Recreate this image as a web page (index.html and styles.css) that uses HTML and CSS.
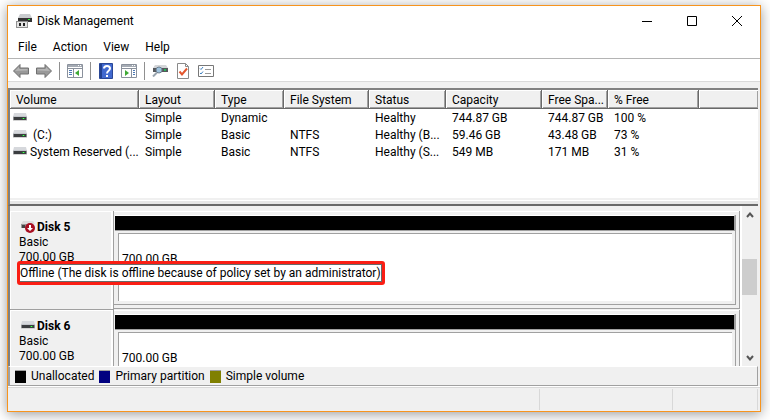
FILE: index.html
```html
<!DOCTYPE html>
<html lang="en">
<head>
    <meta charset="UTF-8">
    <meta name="viewport" content="width=device-width, initial-scale=1.0">
    <title>Disk Management</title>
    <link rel="stylesheet" href="styles.css">
</head>
<body>
<!-- shared drive icon -->
<svg class="defs" aria-hidden="true">
    <symbol id="drive" viewBox="0 0 14 8">
        <path d="M1 0h12l1 4H0z" fill="#d6d8dc"/>
        <path d="M0 3h14v1H0z" fill="#c3c6cb"/>
        <path d="M0 4h14v3H0z" fill="#3b3d40"/>
        <path d="M0 7h14v1H0z" fill="#d4d4d4"/>
        <path d="M0 4h1v3H0zM13 4h1v3h-1z" fill="#8b8d90"/>
        <path d="M9 5h3v1H9z" fill="#1c9a2a"/>
        <path d="M10 5h1v1h-1z" fill="#4dff5c"/>
    </symbol>
</svg>

<div class="window">
    <header class="titlebar">
        <svg class="app-icon" viewBox="0 0 16 15" width="16" height="15">
            <path d="M4 0h10l2 4H2z" fill="#c9cbce"/>
            <path d="M2 4h14v4H2z" fill="#333"/>
            <path d="M12 5h2v1h-2z" fill="#2df03c"/>
            <path d="M0 7h12v7H0z" fill="#909090"/>
            <path d="M1 8h10v5H1z" fill="#e4e4e4"/>
            <path d="M3 9h2v3H3zM7 9h2v3H7z" fill="#222"/>
        </svg>
        <h1>Disk Management</h1>
        <div class="controls">
            <button aria-label="Minimize"><svg viewBox="0 0 10 10" width="10" height="10"><path d="M0 5h10v1H0z"/></svg></button>
            <button aria-label="Maximize"><svg viewBox="0 0 10 10" width="10" height="10"><path d="M.5.5h9v9h-9z" fill="none" stroke="#000"/></svg></button>
            <button aria-label="Close"><svg viewBox="0 0 10 10" width="10" height="10"><path d="M0 0l10 10M10 0L0 10" stroke="#000"/></svg></button>
        </div>
    </header>

    <nav class="menu">
        <button>File</button>
        <button>Action</button>
        <button>View</button>
        <button>Help</button>
    </nav>

    <div class="toolbar">
        <button aria-label="Back"><svg viewBox="0 0 16 14" width="16" height="14"><path d="M.5 7L7 .5V4h8.500v6H7v3.500z" fill="#999" stroke="#707070"/><path d="M2 7l4-4v2h8.500v1.500z" fill="#b5b5b5"/></svg></button>
        <button aria-label="Forward"><svg viewBox="0 0 16 14" width="16" height="14"><path d="M15.500 7L9 .5V4H.5v6H9v3.500z" fill="#999" stroke="#707070"/><path d="M14 7l-4-4v2H1.500v1.500z" fill="#b5b5b5"/></svg></button>
        <span class="divider"></span>
        <button aria-label="Show console tree"><svg viewBox="0 0 16 14" width="16" height="14">
            <path d="M.5.5h15v13H.5z" fill="#fff" stroke="#8a919c"/>
            <path d="M1 1h14v2H1z" fill="#a5abb4"/><path d="M11 1h1v1h-1zM13 1h1v1h-1z" fill="#fff"/><path d="M1 4h14v1H1z" fill="#8a919c"/>
            <path d="M6 5h1v8H6z" fill="#8a919c"/><path d="M2 6h3v1H2zM2 8h3v1H2zM2 10h3v1H2z" fill="#4a78b5"/>
            <path d="M12 6v6L8 9z" fill="#3faa35"/>
        </svg></button>
        <span class="divider"></span>
        <button aria-label="Help topics"><svg viewBox="0 0 14 16" width="14" height="16">
            <path d="M.5.5h13v15H.5z" fill="#4169cf" stroke="#2a4796"/><path d="M1 1h2v14H1z" fill="#22408f"/>
            <path d="M5 5.500C5 2 11 2 11 5.500C11 8 8 7.500 8 10.500" fill="none" stroke="#fff" stroke-width="2"/><path d="M7 12h2v2H7z" fill="#fff"/>
        </svg></button>
        <button aria-label="Show action pane"><svg viewBox="0 0 16 14" width="16" height="14">
            <path d="M.5.5h15v13H.5z" fill="#fff" stroke="#8a919c"/>
            <path d="M1 1h14v2H1z" fill="#a5abb4"/><path d="M11 1h1v1h-1zM13 1h1v1h-1z" fill="#fff"/><path d="M1 4h14v1H1z" fill="#8a919c"/>
            <path d="M10 5h1v8h-1z" fill="#8a919c"/><path d="M12 6h2v1h-2zM12 8h2v1h-2zM12 10h2v1h-2z" fill="#4a78b5"/>
            <path d="M4 6v6l4-3z" fill="#3faa35"/>
        </svg></button>
        <span class="divider"></span>
        <button aria-label="Rescan disks"><svg viewBox="0 0 16 12" width="16" height="12">
            <path d="M3 0h11l2 3H1z" fill="#d4d6d9"/><path d="M1 3h15v4H1z" fill="#55585c"/><path d="M12 4h2v2h-2z" fill="#27b85a"/>
            <circle cx="7" cy="5" r="3" fill="#9fc3de" stroke="#6d7f90"/><path d="M5 7.500L1 11.500" stroke="#9aa5af" stroke-width="2"/>
        </svg></button>
        <button aria-label="Properties"><svg viewBox="0 0 12 16" width="12" height="16">
            <path d="M.5.5h8l3 3v12H.5z" fill="#fff" stroke="#8a8a8a"/><path d="M8.500 .5v3h3" fill="none" stroke="#8a8a8a"/><path d="M2.500 8.500l2.500 3 5-6" fill="none" stroke="#e4572e" stroke-width="2"/>
        </svg></button>
        <button aria-label="Settings"><svg viewBox="0 0 16 12" width="16" height="12">
            <path d="M.5.5h15v11H.5z" fill="#fff" stroke="#777"/><path d="M2 3.500l1 1 2-2.500M2 8l1 1 2-2.500" fill="none" stroke="#3e7fc0"/>
            <path d="M7 4h6v1H7zM7 8h6v1H7z" fill="#9a9a9a"/>
        </svg></button>
    </div>

    <section class="volumes">
        <table>
            <colgroup>
                <col class="c-volume"><col class="c-layout"><col class="c-type"><col class="c-fs"><col class="c-status">
                <col class="c-capacity"><col class="c-space"><col class="c-free"><col>
            </colgroup>
            <thead>
                <tr><th>Volume</th><th>Layout</th><th>Type</th><th>File System</th><th>Status</th><th>Capacity</th><th>Free Spa...</th><th>% Free</th><th></th></tr>
            </thead>
            <tbody>
                <tr><td><svg class="drive"><use href="#drive"/></svg></td><td>Simple</td><td>Dynamic</td><td></td><td>Healthy</td><td>744.87 GB</td><td>744.87 GB</td><td>100 %</td><td></td></tr>
                <tr><td><svg class="drive"><use href="#drive"/></svg>&nbsp;(C:)</td><td>Simple</td><td>Basic</td><td>NTFS</td><td>Healthy (B...</td><td>59.46 GB</td><td>43.48 GB</td><td>73 %</td><td></td></tr>
                <tr><td><svg class="drive"><use href="#drive"/></svg>System Reserved (...</td><td>Simple</td><td>Basic</td><td>NTFS</td><td>Healthy (S...</td><td>549 MB</td><td>171 MB</td><td>31 %</td><td></td></tr>
            </tbody>
        </table>
        <div class="splitter"></div>
    </section>

    <section class="disks">
        <div class="disk-list">
            <div class="disk">
                <div class="disk-info">
                    <h2><svg class="drive offline" viewBox="0 0 14 12">
                        <path d="M2 0h10l2 3H0z" fill="#dcdcdc"/><path d="M0 3h6v4H0z" fill="#9a9a9a"/><path d="M1 4h3v3H1z" fill="#444"/>
                        <circle cx="9" cy="7" r="5" fill="#a80f22"/><path d="M8 4h2v3h2L9 10 6 7h2z" fill="#fff"/>
                    </svg>Disk 5</h2>
                    <p>Basic</p>
                    <p>700.00 GB</p>
                    <div class="callout"><p>Offline (The disk is offline because of policy set by an administrator)</p></div>
                </div>
                <div class="graph">
                    <div class="partition"><div class="bar"></div><div class="space">700.00 GB</div></div>
                </div>
            </div>
            <div class="disk">
                <div class="disk-info">
                    <h2><svg class="drive"><use href="#drive"/></svg>Disk 6</h2>
                    <p>Basic</p>
                    <p>700.00 GB</p>
                </div>
                <div class="graph">
                    <div class="partition"><div class="bar"></div><div class="space">700.00 GB</div></div>
                </div>
            </div>
        </div>
        <div class="scrollbar">
            <button aria-label="Scroll up"><svg viewBox="0 0 8 6" width="8" height="6"><path d="M1 5l3-3.500L7 5" fill="none" stroke="#555" stroke-width="2"/></svg></button>
            <div class="track"><div class="thumb"></div></div>
            <button aria-label="Scroll down"><svg viewBox="0 0 8 6" width="8" height="6"><path d="M1 1l3 3.500L7 1" fill="none" stroke="#555" stroke-width="2"/></svg></button>
        </div>
    </section>

    <ul class="legend">
        <li><span class="swatch unallocated"></span>Unallocated</li>
        <li><span class="swatch primary"></span>Primary partition</li>
        <li><span class="swatch simple"></span>Simple volume</li>
    </ul>

    <footer class="statusbar"><span></span><span></span><span></span></footer>
</div>
</body>
</html>
```
FILE: styles.css
```css
* {
    box-sizing: border-box;
}

body {
    margin: 0;
    height: 100vh;
    padding: 5px 9px 8px 7px;
    background: #fff;
    color: #000;
    font-family: Roboto, "Open Sans", sans-serif;
    font-size: 12px;
    line-height: 15px;
}

h1, h2, p, ul {
    margin: 0;
    padding: 0;
    font-size: 12px;
}

h1 {
    font-weight: 400;
}

button {
    display: flex;
    align-items: center;
    justify-content: center;
    padding: 0;
    border: 0;
    background: none;
    color: inherit;
    font: inherit;
}

.defs {
    position: absolute;
    width: 0;
    height: 0;
}

.window {
    display: flex;
    flex-direction: column;
    height: 100%;
    border: 1px solid #f7941d;
    background: #f0f0f0;
    box-shadow: 0 2px 12px rgba(0, 0, 0, 0.4);
}

/* title, menu, toolbar */
.titlebar {
    display: flex;
    align-items: center;
    height: 30px;
    padding-left: 8px;
    background: #fff;
}

.app-icon {
    margin-right: 5px;
}

.controls {
    display: flex;
    margin: 0 1px 0 auto;
}

.controls button {
    width: 45px;
    height: 30px;
}

.menu {
    display: flex;
    gap: 16px;
    height: 23px;
    padding-left: 10px;
    border-bottom: 1px solid #b4b4b4;
    background: #fff;
}

.toolbar {
    display: flex;
    align-items: center;
    gap: 7px;
    height: 23px;
    padding: 2px 0 0 5px;
    border-bottom: 1px solid #d9d9d9;
    background: #fff;
}

.toolbar button {
    width: 16px;
}

.divider {
    width: 1px;
    height: 18px;
    background: #909090;
}

/* volume list */
.volumes {
    display: flex;
    flex-direction: column;
    height: 118px;
    margin: 6px 2px 0 0;
    border: solid #696969;
    border-width: 2px 0 2px 2px;
    border-top-color: #808080;
    border-left-color: #808080;
    background: #fff;
}

table {
    width: 100%;
    table-layout: fixed;
    border-spacing: 0;
}

.c-volume { width: 129px; }
.c-layout { width: 76px; }
.c-type { width: 69px; }
.c-fs { width: 85px; }
.c-status { width: 77px; }
.c-capacity { width: 96px; }
.c-space { width: 66px; }
.c-free { width: 91px; }

th, td {
    padding: 2px 0 0 6px;
    font-weight: 400;
    text-align: left;
    white-space: nowrap;
}

th {
    height: 19px;
    border-right: 1px solid #696969;
    border-bottom: 1px solid #696969;
    background: #f0f0f0;
    box-shadow: inset 1px 1px #fff, inset -1px -1px #a0a0a0;
}

th:last-child {
    border-right: 0;
}

td {
    height: 17px;
}

td:first-child {
    padding-left: 3px;
}

.drive {
    width: 14px;
    height: 8px;
    margin-right: 3px;
    vertical-align: 1px;
}

.splitter {
    height: 6px;
    margin-top: auto;
    border-top: 2px solid #f0f0f0;
    border-bottom: 3px solid #e6e6e6;
}

/* disk graph */
.disks {
    display: flex;
    flex: 1;
    min-height: 0;
    margin-right: 2px;
    border-left: 2px solid #808080;
}

.disk-list {
    flex: 1;
    padding-top: 5px;
    overflow: hidden;
}

.disk {
    display: flex;
    height: 99px;
}

.disk-info {
    position: relative;
    width: 104px;
    padding: 9px 0 0 9px;
    border: solid #a0a0a0;
    border-width: 0 1px 1px 0;
    box-shadow: inset 1px 1px #fff, inset -2px 0 #fff;
}

.disk-info h2 {
    font-weight: 700;
}

.disk-info h2 .drive {
    margin-left: 2px;
    margin-right: 2px;
}

.drive.offline {
    height: 12px;
    vertical-align: -2px;
}

/* full status text, laid over the graph */
.callout {
    position: absolute;
    z-index: 1;
    top: 50px;
    left: 7px;
    border: 3px solid #fa1e14;
    border-radius: 3px;
    background: #fff;
    white-space: nowrap;
}

.callout p {
    padding-top: 1px;
    border: 1px solid #696969;
    border-left: 0;
}

.graph {
    flex: 1;
    margin-bottom: 1px;
    padding: 4px 3px 3px 0;
    border: solid #a0a0a0;
    border-width: 0 1px 1px 0;
    box-shadow: inset 0 1px #fff;
}

.partition {
    display: flex;
    flex-direction: column;
    height: 100%;
    border: solid #a0a0a0;
    border-width: 0 1px 1px 0;
}

.bar {
    height: 16px;
    margin-left: 1px;
    border: solid #a0a0a0;
    border-width: 0 1px 1px 0;
    border-top: 1px solid #fff;
    background: #000;
}

.space {
    flex: 1;
    margin: 2px 3px 3px 4px;
    padding: 18px 0 0 3px;
    border: solid #a0a0a0;
    border-width: 1px 0 0 1px;
    background: #fff;
}

.scrollbar {
    display: flex;
    flex-direction: column;
    width: 18px;
    border-left: 2px solid #fff;
}

.scrollbar button {
    height: 17px;
}

.track {
    flex: 1;
}

.thumb {
    height: 36px;
    margin: 36px 1px 0 0;
    background: #cdcdcd;
}

/* legend and status bar */
.legend {
    display: flex;
    align-items: center;
    gap: 5px;
    height: 20px;
    margin-right: 2px;
    padding-left: 5px;
    border: solid #a0a0a0;
    border-width: 1px 1px 1px 2px;
    border-top-color: #fff;
    list-style: none;
}

.legend li {
    display: flex;
    align-items: center;
}

.swatch {
    width: 11px;
    height: 13px;
    margin-right: 5px;
    border-top: 1px solid #a0a0a0;
}

.unallocated { background: #000; }
.primary { background: #000080; }
.simple { background: #808000; }

.statusbar {
    display: flex;
    justify-content: flex-end;
    height: 25px;
    padding: 2px 2px 1px 0;
    border-top: 1px solid #fff;
    box-shadow: inset 0 1px #d8d8d8;
}

.statusbar span {
    border-right: 1px solid #d8d8d8;
}

.statusbar span:nth-child(2) { width: 133px; }
.statusbar span:nth-child(3) { width: 85px; }
```
